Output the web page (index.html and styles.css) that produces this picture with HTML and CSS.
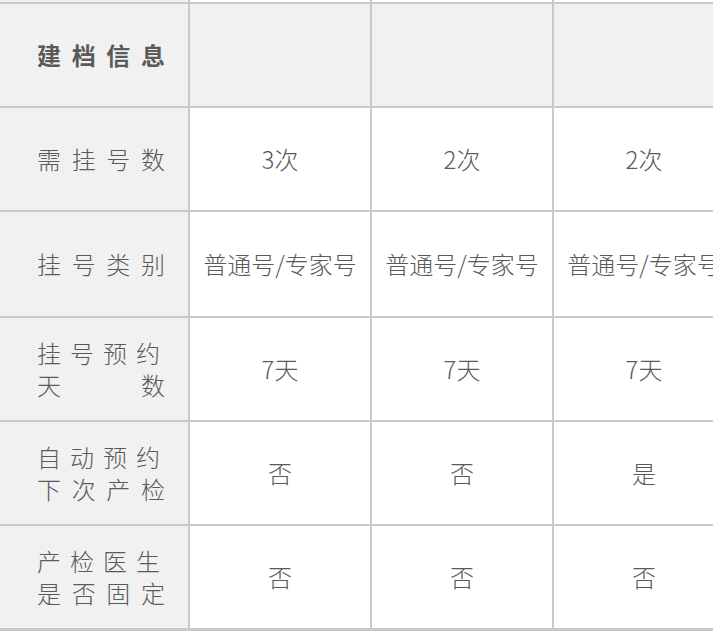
FILE: index.html
```html
<!DOCTYPE html>
<html lang="zh-CN">
<head>
<meta charset="utf-8">
<title>建档信息</title>
<link rel="stylesheet" href="styles.css">
</head>
<body>
<div class="viewport">
  <div class="grid">
    <div class="cell head cut"></div>
    <div class="cell cut"></div>
    <div class="cell cut"></div>
    <div class="cell cut"></div>

    <div class="cell head"><div class="label bold">建档信息</div></div>
    <div class="cell grey"></div>
    <div class="cell grey"></div>
    <div class="cell grey"></div>

    <div class="cell head"><div class="label">需挂号数</div></div>
    <div class="cell">3次</div>
    <div class="cell">2次</div>
    <div class="cell">2次</div>

    <div class="cell head"><div class="label">挂号类别</div></div>
    <div class="cell">普通号/专家号</div>
    <div class="cell">普通号/专家号</div>
    <div class="cell">普通号/专家号</div>

    <div class="cell head"><div class="label">挂号预约天数</div></div>
    <div class="cell">7天</div>
    <div class="cell">7天</div>
    <div class="cell">7天</div>

    <div class="cell head"><div class="label">自动预约下次产检</div></div>
    <div class="cell">否</div>
    <div class="cell">否</div>
    <div class="cell">是</div>

    <div class="cell head"><div class="label">产检医生是否固定</div></div>
    <div class="cell">否</div>
    <div class="cell">否</div>
    <div class="cell">否</div>
  </div>
</div>
</body>
</html>
```
FILE: styles.css
```css
html, body {
  margin: 0;
  padding: 0;
  background: #ffffff;
}

body {
  font-family: "Noto Sans CJK SC", "Noto Sans", sans-serif;
  color: #5a5a5a;
}

.viewport {
  width: 713px;
  overflow: hidden;
}

.grid {
  display: grid;
  grid-template-columns: 188px 180px 180px 180px;
  grid-template-rows: 2px 102px 102px 104px 102px 102px 102px;
  gap: 2px;
  width: 734px;
  background: #c9c9c9;
  padding-bottom: 3px;
}

.cell {
  background: #ffffff;
  display: flex;
  align-items: center;
  justify-content: center;
  font-size: 24px;
  font-weight: 300;
  line-height: 32px;
  white-space: nowrap;
}

.cell.cut {
  font-size: 0;
  line-height: 0;
}

.cell.grey,
.cell.head {
  background: #f1f1f1;
}

.cell.head {
  justify-content: flex-start;
  padding-left: 37px;
}

.label {
  width: 137px;
  white-space: normal;
  letter-spacing: 9px;
  text-align: left;
  text-align-last: justify;
  word-break: break-all;
}

.label.bold {
  font-weight: 700;
}
```
